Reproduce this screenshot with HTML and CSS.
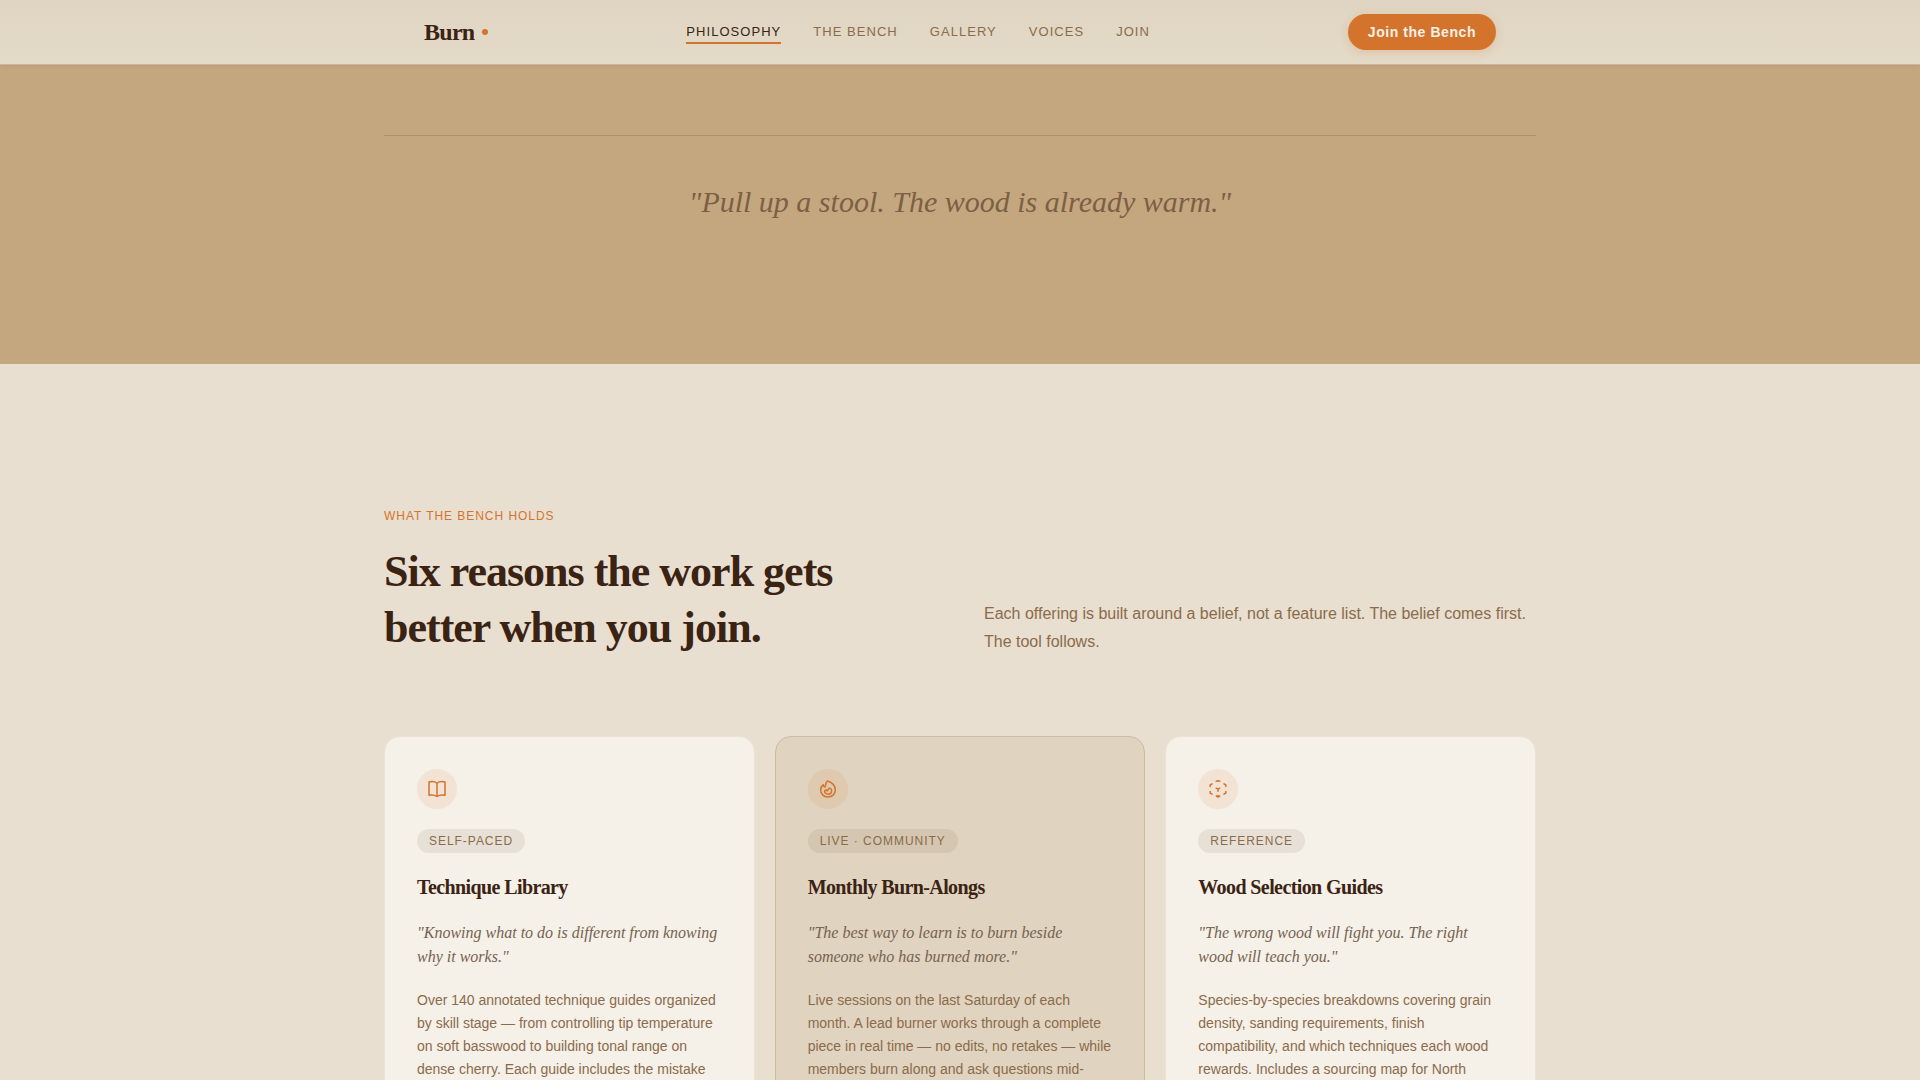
FILE: index.html
```
<!DOCTYPE html>
<html lang="en">
<head>
<meta charset="utf-8">
<meta name="viewport" content="width=device-width, initial-scale=1">
<title>Burn</title>
<link rel="stylesheet" href="styles.css">
</head>
<body>
<header class="site-header">
  <div class="header-inner">
    <a class="logo" href="#">Burn<span class="logo-dot"></span></a>
    <nav class="nav" aria-label="Main">
      <a class="nav-link active" href="#philosophy">Philosophy</a>
      <a class="nav-link" href="#bench">The Bench</a>
      <a class="nav-link" href="#gallery">Gallery</a>
      <a class="nav-link" href="#voices">Voices</a>
      <a class="nav-link" href="#join">Join</a>
    </nav>
    <button class="join-button" type="button">Join the Bench</button>
  </div>
</header>
<main>
  <section class="philosophy" id="philosophy">
    <div class="container">
      <p class="pull-quote">"Pull up a stool. The wood is already warm."</p>
    </div>
  </section>
  <section class="bench" id="bench">
    <div class="container">
      <p class="eyebrow">What the bench holds</p>
      <div class="bench-intro">
        <h2 class="bench-title">Six reasons the work gets better when you join.</h2>
        <p class="bench-lead">Each offering is built around a belief, not a feature list. The belief comes first. The tool follows.</p>
      </div>
      <div class="cards">
        <article class="card">
          <div class="card-icon">
            <svg viewBox="0 0 20 20" aria-hidden="true"><path d="M10 4.2C8.2 2.6 5 2.3 2 2.9V16.2C5 15.7 8 16 10 17.5C12 16 15 15.7 18 16.2V2.9C15 2.3 11.8 2.6 10 4.2V17.5"/></svg>
          </div>
          <span class="tag">Self-paced</span>
          <h3 class="card-title">Technique Library</h3>
          <p class="card-belief">"Knowing what to do is different from knowing why it works."</p>
          <p class="card-text">Over 140 annotated technique guides organized by skill stage — from controlling tip temperature on soft basswood to building tonal range on dense cherry. Each guide includes the mistake</p>
        </article>
        <article class="card featured">
          <div class="card-icon">
            <svg viewBox="0 0 20 20" aria-hidden="true"><path d="M9.3 2C13.4 3.2 17.3 6.4 17.3 11.1C17.3 15.3 14.1 18 10 18C5.8 18 2.7 15.2 2.7 11.1C2.7 8.7 3.7 6.9 5.3 5.7C5.4 6.9 5.9 7.8 6.9 8.1C7.9 6.3 7.4 3.8 9.3 2Z"/><path d="M10.2 10.3C11.1 8.6 13.6 9 13.6 11.7C13.6 13.8 12 15.2 10 15.2C8 15.2 6.5 13.8 6.6 12.2C6.7 10.9 8.2 10.5 8.8 11.5C9.2 12.2 9.9 11.5 10.2 10.3Z"/></svg>
          </div>
          <span class="tag">Live · Community</span>
          <h3 class="card-title">Monthly Burn-Alongs</h3>
          <p class="card-belief">"The best way to learn is to burn beside someone who has burned more."</p>
          <p class="card-text">Live sessions on the last Saturday of each month. A lead burner works through a complete piece in real time — no edits, no retakes — while members burn along and ask questions mid-</p>
        </article>
        <article class="card">
          <div class="card-icon">
            <svg viewBox="0 0 20 20" aria-hidden="true"><path d="M8.3 2.3L10 1.8L11.7 2.3M2.2 7.5V6L4 4.9M16 4.9L17.8 6V7.5M2.2 12.5V14L4 15.1M17.8 12.5V14L16 15.1M8.3 17L10 18L11.7 17M10 16.5V18M8.2 9.2L10 10.2L11.8 9.2M10 10.2V12.3"/></svg>
          </div>
          <span class="tag">Reference</span>
          <h3 class="card-title">Wood Selection Guides</h3>
          <p class="card-belief">"The wrong wood will fight you. The right wood will teach you."</p>
          <p class="card-text">Species-by-species breakdowns covering grain density, sanding requirements, finish compatibility, and which techniques each wood rewards. Includes a sourcing map for North</p>
        </article>
      </div>
    </div>
  </section>
</main>
</body>
</html>
```
FILE: styles.css
```
:root {
  --ink: #3b2314;
  --ember: #d4742c;
  --bark: #8b6b4a;
  --sand: #c4a77f;
  --paper: #e8dfd0;
  --cream: #f5f0e8;
  --serif: "Liberation Serif", "Times New Roman", serif;
  --sans: "Liberation Sans", Arial, sans-serif;
}

* {
  box-sizing: border-box;
}

body {
  margin: 0;
  background: var(--paper);
  color: var(--ink);
  font-family: var(--sans);
}

h2, h3, p {
  margin: 0;
}

.container {
  max-width: 1152px;
  margin: 0 auto;
}

/* Header */
.site-header {
  position: sticky;
  top: 0;
  z-index: 10;
  background: linear-gradient(#dfd5c2, #e4dac8);
  border-bottom: 1px solid #c8b899;
  box-shadow: 0 1px 4px rgba(59, 35, 20, 0.08);
}

.header-inner {
  display: flex;
  align-items: center;
  justify-content: space-between;
  max-width: 1152px;
  height: 64px;
  margin: 0 auto;
  padding: 0 40px;
}

.logo {
  display: flex;
  align-items: center;
  gap: 8px;
  color: var(--ink);
  font: bold 24px/32px var(--serif);
  letter-spacing: -0.03em;
  text-decoration: none;
}

.logo-dot {
  width: 6px;
  height: 6px;
  border-radius: 50%;
  background: var(--ember);
}

.nav {
  display: flex;
  gap: 32px;
}

.nav-link {
  padding: 4px 0 2px;
  border-bottom: 2px solid transparent;
  color: var(--bark);
  font-size: 13px;
  line-height: 16px;
  letter-spacing: 0.08em;
  text-transform: uppercase;
  text-decoration: none;
}

.nav-link.active {
  border-color: var(--ember);
  color: var(--ink);
}

.join-button {
  height: 36px;
  padding: 0 20px;
  border: 0;
  border-radius: 18px;
  background: var(--ember);
  box-shadow: 0 2px 8px rgba(212, 116, 44, 0.25);
  color: var(--cream);
  font: bold 14px/20px var(--sans);
  letter-spacing: 0.04em;
}

/* Philosophy */
.philosophy {
  padding: 70px 0 136px;
  background: var(--sand);
}

.pull-quote {
  padding-top: 40px;
  border-top: 1px solid #b09068;
  color: #7d5f45;
  font: italic 30px/52px var(--serif);
  text-align: center;
}

/* The bench */
.bench {
  padding: 144px 0;
}

.eyebrow {
  margin-bottom: 20px;
  color: var(--ember);
  font-size: 12px;
  line-height: 16px;
  letter-spacing: 0.08em;
  text-transform: uppercase;
}

.bench-intro {
  display: grid;
  grid-template-columns: 1fr 1fr;
  align-items: end;
  gap: 48px;
  margin-bottom: 80px;
}

.bench-title {
  font: bold 44px/56px var(--serif);
  letter-spacing: -1px;
}

.bench-lead {
  color: var(--bark);
  font-size: 16px;
  line-height: 28px;
}

.cards {
  display: grid;
  grid-template-columns: repeat(3, 1fr);
  gap: 20px;
}

.card {
  padding: 32px;
  border: 1px solid #ece3d5;
  border-radius: 16px;
  background: var(--cream);
}

.card.featured {
  border-color: #cfbb9f;
  background: #e0d3bf;
}

.card-icon {
  display: grid;
  place-items: center;
  width: 40px;
  height: 40px;
  margin-bottom: 20px;
  border-radius: 50%;
  background: rgba(212, 116, 44, 0.1);
}

.card-icon svg {
  width: 20px;
  height: 20px;
  fill: none;
  stroke: var(--ember);
  stroke-width: 1.5;
  stroke-linecap: round;
  stroke-linejoin: round;
}

.tag {
  display: block;
  width: fit-content;
  margin-bottom: 20px;
  padding: 4px 12px;
  border-radius: 12px;
  background: rgba(107, 91, 62, 0.1);
  color: var(--bark);
  font-size: 12px;
  line-height: 16px;
  letter-spacing: 0.08em;
  text-transform: uppercase;
}

.card-title {
  margin-bottom: 20px;
  font: bold 20px/28px var(--serif);
  letter-spacing: -0.03em;
}

.card-belief {
  margin-bottom: 20px;
  color: #75624f;
  font: italic 16px/24px var(--serif);
}

.card-text {
  color: var(--bark);
  font-size: 14px;
  line-height: 23px;
}
```
